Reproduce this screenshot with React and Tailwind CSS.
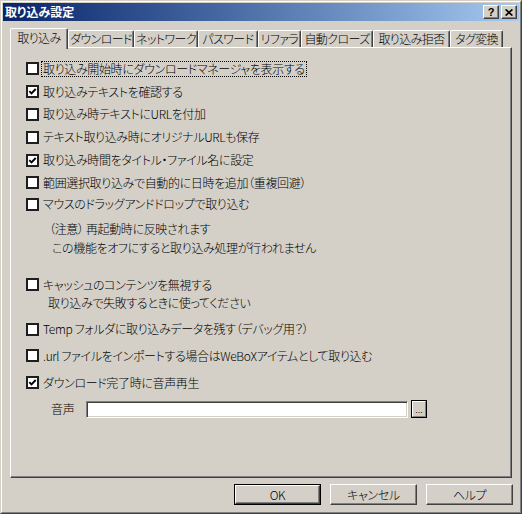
import React from "react";

function Check({ checked }) {
  return (
    <span className="w-[13px] h-[13px] shrink-0 bg-white border-2 border-[#1e1e1e] flex items-center justify-center">
      {checked && (
        <svg width="9" height="9" viewBox="0 0 9 9">
          <path d="M1.3 4.2 L3.5 6.4 L7.7 2" stroke="#000" strokeWidth="1.9" fill="none" />
        </svg>
      )}
    </span>
  );
}

function Row({ h, mt, checked, focused, children }) {
  return (
    <div className={`flex items-center ${h} ${mt || ""}`}>
      <Check checked={checked} />
      <span
        className={`ml-[3px] px-[1px] text-[12px] leading-[14px] whitespace-nowrap ${
          focused ? "outline outline-1 outline-dotted outline-black" : ""
        }`}
      >
        {children}
      </span>
    </div>
  );
}

function Btn({ children, isDefault }) {
  const inner = (
    <div className="w-full h-full flex items-center justify-center border border-t-white border-l-white border-r-[#404040] border-b-[#404040] shadow-[inset_-1px_-1px_#808080] text-[12px] leading-[14px]">
      {children}
    </div>
  );
  return isDefault ? (
    <div className="w-[87px] h-[21px] border border-black">{inner}</div>
  ) : (
    <div className="w-[87px] h-[21px]">{inner}</div>
  );
}

const tabs = [
  ["取り込み", "w-[58px]", true],
  ["ダウンロード", "w-[66px]"],
  ["ネットワーク", "w-[64px]"],
  ["パスワード", "w-[60px]"],
  ["リファラ", "w-[43px]"],
  ["自動クローズ", "w-[72px]"],
  ["取り込み拒否", "w-[77px]"],
  ["タグ変換", "w-[53px]"],
];

export default function App() {
  return (
    <div className="w-[522px] h-[514px] bg-[#D4D0C8] border border-t-[#D4D0C8] border-l-[#D4D0C8] border-r-[#404040] border-b-[#404040] font-['Noto_Sans_CJK_JP',sans-serif] font-light tracking-[-0.35px] [font-feature-settings:'palt'] text-black">
      <div className="w-full h-full border border-t-white border-l-white border-r-[#808080] border-b-[#808080] p-[1px] flex flex-col">
        {/* Title bar */}
        <div className="h-[18px] shrink-0 flex items-center pl-[2px] pr-[2px] bg-linear-to-r from-[#0A246A] to-[#A6CAF0]">
          <span className="text-white font-bold tracking-normal text-[12px] leading-[14px]">取り込み設定</span>
          <div className="ml-auto flex gap-[2px]">
            <div className="w-[16px] h-[14px] bg-[#D4D0C8] border border-t-white border-l-white border-r-[#404040] border-b-[#404040] shadow-[inset_-1px_-1px_#808080] flex items-center justify-center">
              <span className="font-['Liberation_Sans',sans-serif] font-bold text-[11px] leading-[11px] mt-[1px]">?</span>
            </div>
            <div className="w-[16px] h-[14px] bg-[#D4D0C8] border border-t-white border-l-white border-r-[#404040] border-b-[#404040] shadow-[inset_-1px_-1px_#808080] flex items-center justify-center">
              <svg width="8" height="7" viewBox="0 0 8 7">
                <path d="M0.6 0.4 L7.4 6.6 M7.4 0.4 L0.6 6.6" stroke="#000" strokeWidth="1.6" fill="none" />
              </svg>
            </div>
          </div>
        </div>

        {/* Tabs */}
        <div className="mt-[7px] mx-[7px] h-[19px] flex items-end pl-[2px] relative z-10">
          {tabs.map(([label, w, sel]) =>
            sel ? (
              <div
                key={label}
                className={`${w} -ml-[2px] h-[21px] -mb-[2px] bg-[#D4D0C8] border-l border-t border-white border-r border-r-[#404040] shadow-[inset_-1px_0_#808080] rounded-t-[2px] flex justify-center pt-[1px] text-[12px] leading-[16px] tracking-[-0.6px] whitespace-nowrap`}
              >
                {label}
              </div>
            ) : (
              <div
                key={label}
                className={`${w} h-[17px] bg-[#D4D0C8] border-l border-t border-white border-r border-r-[#404040] shadow-[inset_-1px_0_#808080] rounded-t-[2px] flex items-center justify-center text-[12px] leading-[16px] tracking-[-0.6px] whitespace-nowrap`}
              >
                {label}
              </div>
            )
          )}
        </div>

        {/* Panel */}
        <div className="mx-[7px] h-[431px] border-l border-t border-white border-r border-b border-r-[#404040] border-b-[#404040] shadow-[inset_-1px_-1px_#808080] pt-[9px] pl-[15px] flex flex-col">
          <Row h="h-[23px]" focused>取り込み開始時にダウンロードマネージャを表示する</Row>
          <Row h="h-[23px]" checked>取り込みテキストを確認する</Row>
          <Row h="h-[22px]">取り込み時テキストにURLを付加</Row>
          <Row h="h-[24px]">テキスト取り込み時にオリジナルURLも保存</Row>
          <Row h="h-[22px]" checked>取り込み時間をタイトル・ファイル名に設定</Row>
          <Row h="h-[23px]">範囲選択取り込みで自動的に日時を追加（重複回避）</Row>
          <Row h="h-[20px]">マウスのドラッグアンドドロップで取り込む</Row>
          <div className="mt-[5px] h-[19px] flex items-center pl-[23px] text-[12px] leading-[14px] whitespace-nowrap">
            （注意） 再起動時に反映されます
          </div>
          <div className="h-[19px] flex items-center pl-[26px] text-[12px] leading-[14px] whitespace-nowrap">
            この機能をオフにすると取り込み処理が行われません
          </div>
          <Row h="h-[21px]" mt="mt-[17px]">キャッシュのコンテンツを無視する</Row>
          <div className="h-[16px] flex items-center pl-[22px] text-[12px] leading-[14px] whitespace-nowrap">
            取り込みで失敗するときに使ってください
          </div>
          <Row h="h-[22px]" mt="mt-[7px]">Temp フォルダに取り込みデータを残す（デバッグ用？）</Row>
          <Row h="h-[21px]" mt="mt-[5px]">.url ファイルをインポートする場合はWeBoXアイテムとして取り込む</Row>
          <Row h="h-[21px]" mt="mt-[6px]" checked>ダウンロード完了時に音声再生</Row>
          <div className="mt-[7px] h-[18px] flex items-center pl-[25px]">
            <span className="w-[35px] text-[12px] leading-[14px]">音声</span>
            <div className="w-[322px] h-[17px] bg-white border border-t-[#808080] border-l-[#808080] border-r-white border-b-white shadow-[inset_1px_1px_#404040,inset_-1px_-1px_#D4D0C8]" />
            <div className="ml-[3px] w-[16px] h-[18px] border border-black">
              <div className="w-full h-full border border-t-white border-l-white border-r-[#808080] border-b-[#808080] flex items-end justify-center">
                <span className="text-[9px] leading-[10px] mb-[1px] tracking-normal font-['Liberation_Sans',sans-serif]">...</span>
              </div>
            </div>
          </div>
        </div>

        {/* Buttons */}
        <div className="mt-[6px] flex justify-end gap-[9px] pr-[6px]">
          <Btn isDefault>OK</Btn>
          <Btn>キャンセル</Btn>
          <Btn>ヘルプ</Btn>
        </div>
      </div>
    </div>
  );
}
